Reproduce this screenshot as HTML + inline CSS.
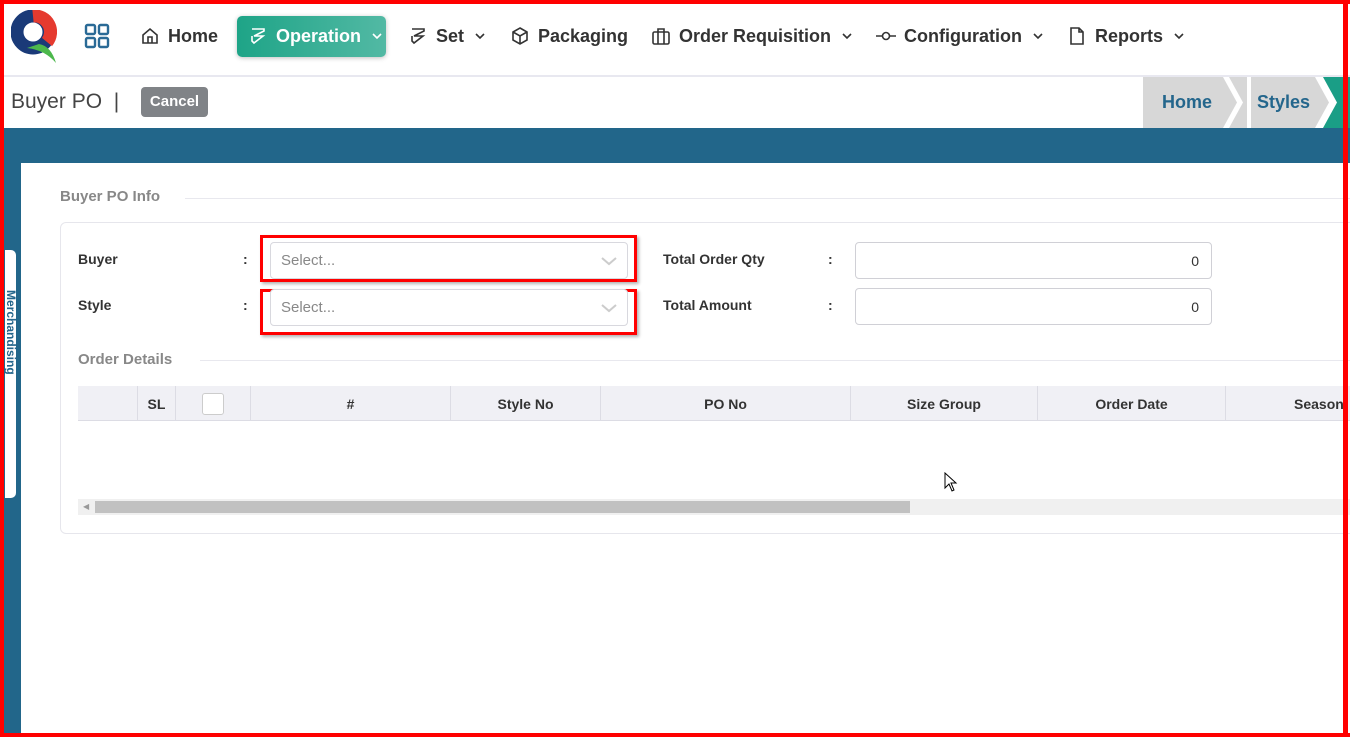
<!DOCTYPE html>
<html><head><meta charset="utf-8"><style>
*{box-sizing:border-box;margin:0;padding:0}
body{width:1350px;height:737px;overflow:hidden;background:#fff;font-family:"Liberation Sans","DejaVu Sans",sans-serif;position:relative;color:#333}
.a{position:absolute}
.nav{font-size:18px;font-weight:bold;color:#333;display:flex;align-items:center;gap:8px;top:24px;height:24px}
.nav svg{width:20px;height:20px;fill:none;stroke:#333;stroke-width:1.6}
.nav svg.cv{width:12px;height:12px;margin-left:2px}
.lbl{font-size:14px;font-weight:bold;color:#333}
.sel{border:1px solid #d8d8de;border-radius:4px;background:#fff;font-size:15px;color:#888;padding:9px 10px}
.sel svg{position:absolute;right:10px;top:13px}
.inp{border:1px solid #d0d0d6;border-radius:4px;background:#fff;font-size:14px;color:#333;text-align:right;padding:10px 12px}
.th{top:386px;height:35px;border-right:1px solid #dcdce4;font-size:14px;font-weight:bold;color:#333;display:flex;align-items:center;justify-content:center}
</style></head><body>
<div class="a" style="left:0;top:75px;width:1350px;height:2px;background:#e8e8f0"></div>
<svg class="a" style="left:11px;top:10px" width="46" height="54" viewBox="0 0 46 54"><circle cx="22" cy="22" r="16" fill="none" stroke="#1a3a78" stroke-width="13"/><path d="M22 6 A16 16 0 0 1 36 32" fill="none" stroke="#e53a2f" stroke-width="13"/><path d="M16 38 Q34 40 45 53 Q40 36 28 34Z" fill="#4cb84c"/></svg>
<svg class="a" style="left:84px;top:23px" width="26" height="26" viewBox="0 0 26 26" fill="none" stroke="#2a6a96" stroke-width="2.4"><rect x="2" y="2" width="9" height="9" rx="1.5"/><rect x="15" y="2" width="9" height="9" rx="1.5"/><rect x="2" y="15" width="9" height="9" rx="1.5"/><rect x="15" y="15" width="9" height="9" rx="1.5"/></svg>
<div class="a nav" style="left:140px"><svg viewBox="0 0 20 20"><path d="M3 9 L10 3 L17 9 V17 H3Z M8 17 V11 H12 V17"/></svg>Home</div>
<div class="a" style="left:237px;top:16px;width:149px;height:41px;border-radius:5px;background:linear-gradient(90deg,#1ea487,#52b9a4);box-shadow:0 1px 5px rgba(0,0,0,.25)"></div>
<div class="a nav" style="left:248px;color:#fff"><svg viewBox="0 0 20 20" style="stroke:#fff"><path d="M4 3 H16 V5 L6 10 H15 L6 17 L4 15 V10"/></svg>Operation<svg class="cv" viewBox="0 0 12 12" style="stroke:#fff"><path d="M2 4 L6 8 L10 4"/></svg></div>
<div class="a nav" style="left:408px"><svg viewBox="0 0 20 20"><path d="M4 3 H16 V5 L6 10 H15 L6 17 L4 15 V10"/></svg>Set<svg class="cv" viewBox="0 0 12 12"><path d="M2 4 L6 8 L10 4"/></svg></div>
<div class="a nav" style="left:510px"><svg viewBox="0 0 20 20"><path d="M10 2 L17 6 V14 L10 18 L3 14 V6Z M3 6 L10 10 L17 6 M10 10 V18"/></svg>Packaging</div>
<div class="a nav" style="left:651px"><svg viewBox="0 0 20 20"><rect x="2" y="6" width="16" height="12" rx="1.5"/><path d="M7 6 V3 H13 V6 M7 6 V18 M13 6 V18"/></svg>Order Requisition<svg class="cv" viewBox="0 0 12 12"><path d="M2 4 L6 8 L10 4"/></svg></div>
<div class="a nav" style="left:876px"><svg viewBox="0 0 20 20"><path d="M0 10 H6 M14 10 H20"/><circle cx="10" cy="10" r="3.5"/></svg>Configuration<svg class="cv" viewBox="0 0 12 12"><path d="M2 4 L6 8 L10 4"/></svg></div>
<div class="a nav" style="left:1067px"><svg viewBox="0 0 20 20"><path d="M4 2 H12 L16 6 V18 H4Z M12 2 V6 H16"/></svg>Reports<svg class="cv" viewBox="0 0 12 12"><path d="M2 4 L6 8 L10 4"/></svg></div>
<div class="a" style="left:11px;top:90px;font-size:21px;color:#444">Buyer PO &nbsp;|</div>
<div class="a" style="left:141px;top:87px;width:67px;height:30px;background:#808387;border-radius:4px;color:#fff;font-size:15px;font-weight:bold;text-align:center;line-height:30px">Cancel</div>
<svg class="a" style="left:1143px;top:77px" width="207" height="51" viewBox="0 0 207 51"><path d="M0 0 H80 L94 25.5 L80 51 H0Z" fill="#d7d7d7"/><path d="M86 0 H104 V51 H86 L100 25.5Z" fill="#d7d7d7"/><path d="M108 0 H172 L186 25.5 L172 51 H108Z" fill="#d7d7d7"/><path d="M180 0 H207 V51 H180 L194 25.5Z" fill="#1a9e86"/><text x="19" y="31" font-family="Liberation Sans" font-size="18" font-weight="bold" fill="#24668c">Home</text><text x="114" y="31" font-family="Liberation Sans" font-size="18" font-weight="bold" fill="#24668c">Styles</text></svg>
<div class="a" style="left:0;top:128px;width:1350px;height:35px;background:#22668a"></div>
<div class="a" style="left:0;top:128px;width:21px;height:609px;background:#22668a"></div>
<div class="a" style="left:21px;top:163px;width:1329px;height:574px;background:#fff;border-top-left-radius:8px"></div>
<div class="a" style="left:5px;top:250px;width:11px;height:248px;background:#fff;border-radius:0 5px 5px 0"></div>
<div class="a" style="left:5px;top:290px;width:11px;height:170px;overflow:hidden;font-size:12px;font-weight:bold;color:#24668c;writing-mode:vertical-rl;line-height:10px">Merchandising</div>
<div class="a" style="left:60px;top:188px;font-size:15px;font-weight:bold;color:#888">Buyer PO Info</div>
<div class="a" style="left:185px;top:198px;width:1165px;height:1px;background:#e8e8ee"></div>
<div class="a" style="left:60px;top:222px;width:1300px;height:312px;border:1px solid #e6e6ec;border-radius:6px"></div>
<div class="a lbl" style="left:78px;top:251px">Buyer</div>
<div class="a lbl" style="left:78px;top:297px">Style</div>
<div class="a lbl" style="left:243px;top:251px">:</div>
<div class="a lbl" style="left:243px;top:297px">:</div>
<div class="a" style="left:260px;top:235px;width:377px;height:47px;border:3px solid #f00;box-shadow:2px 2px 3px rgba(0,0,0,.3)"></div>
<div class="a" style="left:260px;top:289px;width:377px;height:46px;border:3px solid #f00;box-shadow:2px 2px 3px rgba(0,0,0,.3)"></div>
<div class="a sel" style="left:270px;top:242px;width:358px;height:37px">Select...<svg width="16" height="10" viewBox="0 0 16 10" fill="none" stroke="#ccc" stroke-width="2"><path d="M1 2 L8 8 L15 2"/></svg></div>
<div class="a sel" style="left:270px;top:289px;width:358px;height:37px">Select...<svg width="16" height="10" viewBox="0 0 16 10" fill="none" stroke="#ccc" stroke-width="2"><path d="M1 2 L8 8 L15 2"/></svg></div>
<div class="a lbl" style="left:663px;top:251px">Total Order Qty</div>
<div class="a lbl" style="left:663px;top:297px">Total Amount</div>
<div class="a lbl" style="left:828px;top:251px">:</div>
<div class="a lbl" style="left:828px;top:297px">:</div>
<div class="a inp" style="left:855px;top:242px;width:357px;height:37px">0</div>
<div class="a inp" style="left:855px;top:288px;width:357px;height:37px">0</div>
<div class="a" style="left:78px;top:351px;font-size:15px;font-weight:bold;color:#888">Order Details</div>
<div class="a" style="left:200px;top:360px;width:1150px;height:1px;background:#e8e8ee"></div>
<div class="a" style="left:78px;top:386px;width:1272px;height:35px;background:#f0f0f5;border-bottom:1px solid #dcdce4"></div>
<div class="a th" style="left:78px;width:60px"></div>
<div class="a th" style="left:138px;width:38px">SL</div>
<div class="a th" style="left:176px;width:75px"><div style="width:22px;height:22px;background:#fff;border:1px solid #ccc;border-radius:3px"></div></div>
<div class="a th" style="left:251px;width:200px">#</div>
<div class="a th" style="left:451px;width:150px">Style No</div>
<div class="a th" style="left:601px;width:250px">PO No</div>
<div class="a th" style="left:851px;width:187px">Size Group</div>
<div class="a th" style="left:1038px;width:188px">Order Date</div>
<div class="a th" style="left:1226px;width:190px;justify-content:flex-start;padding-left:68px;border:0">Season</div>
<div class="a" style="left:78px;top:499px;width:1272px;height:16px;background:#f0f0f0"></div>
<div class="a" style="left:95px;top:501px;width:815px;height:12px;background:#c1c1c1"></div>
<div class="a" style="left:83px;top:502px;font-size:8px;color:#999">&#9664;</div>
<svg class="a" style="left:944px;top:472px" width="14" height="20" viewBox="0 0 14 20"><path d="M1 1 V16 L5 12 L8 19 L10 18 L7 11 H12Z" fill="#fff" stroke="#000"/></svg>
<div class="a" style="left:0;top:0;width:1350px;height:737px;border:4px solid #f00;border-right:none"></div>
<div class="a" style="left:1343px;top:0;width:5px;height:737px;background:#f00"></div>
</body></html>
